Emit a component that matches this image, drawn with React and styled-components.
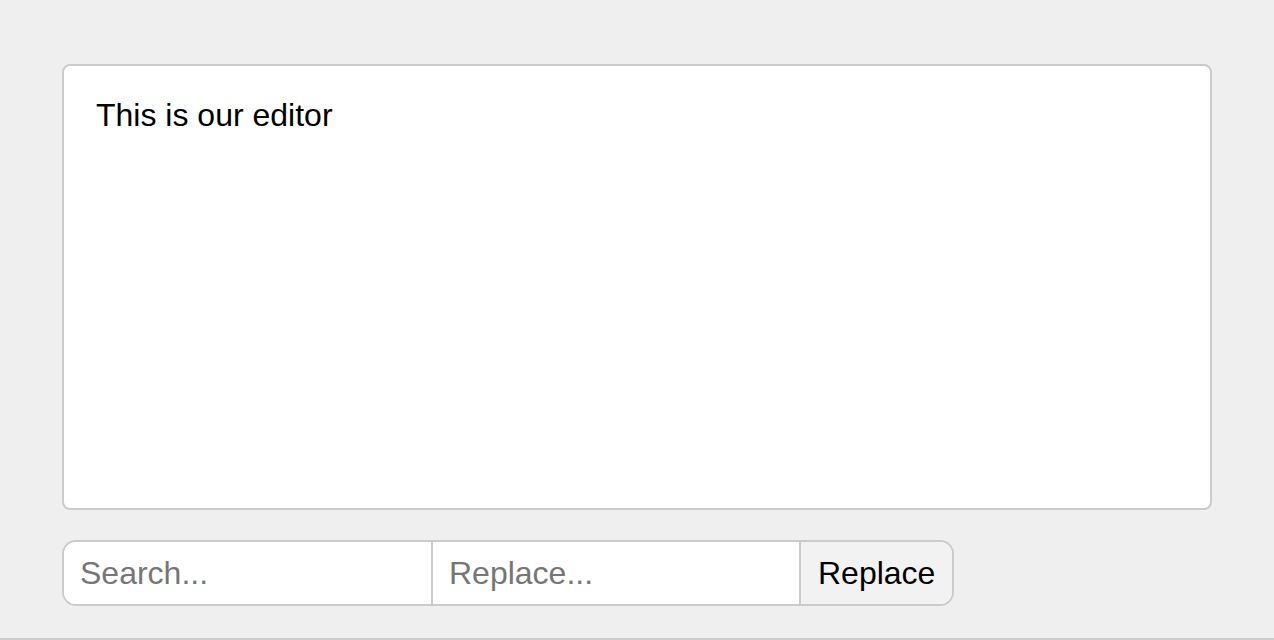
import styled, { createGlobalStyle } from "styled-components";

const GlobalStyle = createGlobalStyle`
  html, body {
    margin: 0;
    padding: 0;
    background: #efefef;
  }
  body {
    font-family: "Liberation Sans", Arial, Helvetica, sans-serif;
  }
`;

const Page = styled.div`
  padding: 64px 62px 32px;
  border-bottom: 2px solid #cbcbcb;
  display: flex;
  flex-direction: column;
  gap: 30px;
`;

const Editor = styled.div`
  box-sizing: border-box;
  height: 446px;
  background: #fff;
  border: 2px solid #cbcbcb;
  border-radius: 8px;
  padding: 31px 32px;
  font-size: 32px;
  line-height: 36px;
  color: #000;
  outline: none;
`;

const Controls = styled.div`
  display: inline-flex;
  align-self: flex-start;
  height: 66px;
  box-sizing: border-box;
  border: 2px solid #cbcbcb;
  border-radius: 14px;
  overflow: hidden;
  background: #fff;
`;

const Field = styled.input`
  box-sizing: border-box;
  width: ${(p) => p.$width}px;
  border: none;
  border-right: 2px solid #cbcbcb;
  padding: 0 16px;
  font-family: inherit;
  font-size: 32px;
  color: #000;
  background: #fff;
  outline: none;
  &::placeholder {
    color: #767676;
  }
`;

const Button = styled.button`
  border: none;
  background: #f2f2f2;
  padding: 0 17px;
  font-family: inherit;
  font-size: 32px;
  color: #000;
  cursor: pointer;
`;

export default function App() {
  return (
    <>
      <GlobalStyle />
      <Page>
        <Editor contentEditable suppressContentEditableWarning>
          This is our editor
        </Editor>
        <Controls>
          <Field $width={369} placeholder="Search..." />
          <Field $width={368} placeholder="Replace..." />
          <Button>Replace</Button>
        </Controls>
      </Page>
    </>
  );
}
